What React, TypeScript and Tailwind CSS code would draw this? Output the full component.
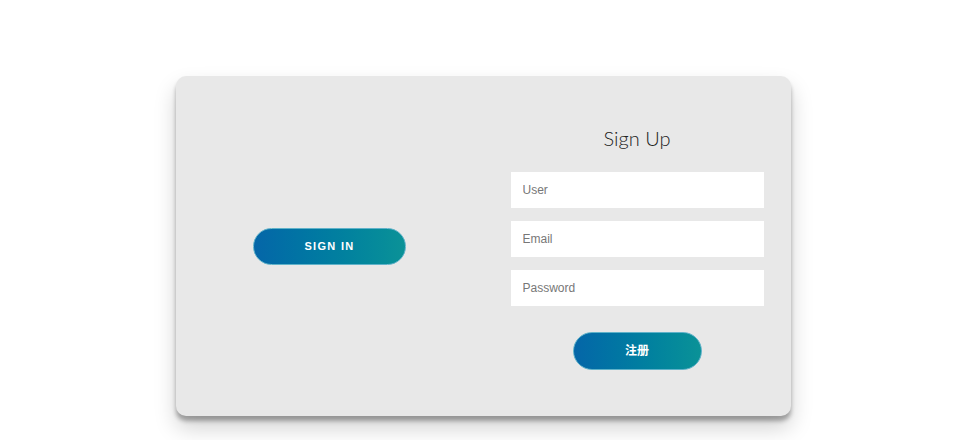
import React from 'react';

const font = { fontFamily: '"Liberation Sans", Arial, sans-serif' };

const Field: React.FC<{ placeholder: string; type?: string }> = ({ placeholder, type = 'text' }) => (
  <input
    type={type}
    placeholder={placeholder}
    className="h-[36px] w-[253px] bg-white px-3 text-[12px] text-[#333] outline-none placeholder:text-[#777]"
    style={font}
  />
);

export default function App() {
  return (
    <div className="min-h-[440px] w-full bg-white pt-[76px]" style={font}>
      <div className="ml-[176px] flex h-[340px] w-[615px] rounded-[10px] bg-[#e8e8e8] shadow-[0_5px_4px_rgba(0,0,0,0.3),0_12px_22px_rgba(0,0,0,0.18)]">
        <div className="flex w-[307px] items-center justify-center">
          <button className="h-[37px] w-[153px] rounded-full border border-[#5fb2c9] bg-gradient-to-r from-[#0566a8] to-[#0b9297] text-[11px] font-bold tracking-[0.12em] text-white">
            SIGN IN
          </button>
        </div>
        <div className="flex flex-1 flex-col items-center pt-[47px]">
          <h2
            className="text-[20px] font-light leading-[30px] text-[#222]"
            style={{ fontFamily: 'Lato, sans-serif' }}
          >
            Sign Up
          </h2>
          <div className="mt-[19px] flex flex-col gap-[13px]">
            <Field placeholder="User" />
            <Field placeholder="Email" type="email" />
            <Field placeholder="Password" type="password" />
          </div>
          <button
            className="mt-[26px] h-[38px] w-[129px] rounded-full border border-[#5fb2c9] bg-gradient-to-r from-[#0566a8] to-[#0b9297] text-[12px] font-bold text-white"
            style={{ fontFamily: '"Liberation Sans", "Noto Sans CJK SC", sans-serif' }}
          >
            注册
          </button>
        </div>
      </div>
    </div>
  );
}
